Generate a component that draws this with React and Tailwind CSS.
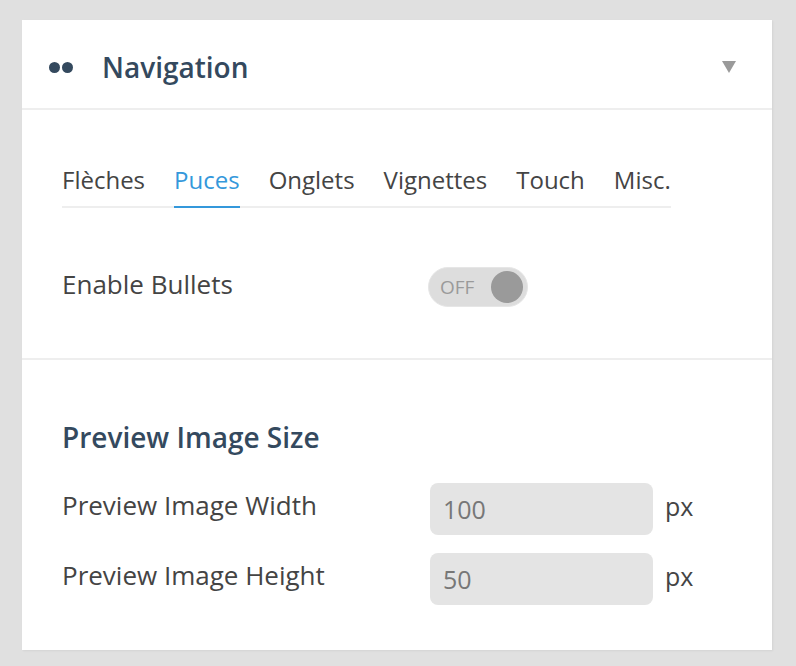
export default function App() {
  const tabs = ["Flèches", "Puces", "Onglets", "Vignettes", "Touch", "Misc."];

  return (
    <div
      className="min-h-[666px] bg-[#e0e0e0] pt-[20px] pl-[22px]"
      style={{ fontFamily: '"Open Sans", sans-serif' }}
    >
      <div className="w-[750px] h-[630px] bg-white shadow-[1px_1px_2px_rgba(0,0,0,0.06)]">
        {/* Header */}
        <div className="h-[90px] flex items-center pl-[27px] pr-[36px] pt-[6px] border-b-2 border-[#eeeeee]">
          <div className="flex gap-[2px]">
            <span className="w-[11px] h-[11px] rounded-full bg-[#34495e]" />
            <span className="w-[11px] h-[11px] rounded-full bg-[#34495e]" />
          </div>
          <h2 className="ml-[29px] text-[28px] font-semibold text-[#34495e]">Navigation</h2>
          <svg className="ml-auto" width="14" height="12" viewBox="0 0 14 12">
            <path d="M0 0H14L7 12Z" fill="#9a9a9a" />
          </svg>
        </div>

        {/* Tabs section */}
        <div className="h-[250px] px-[40px] pt-[53px] border-b-2 border-[#eeeeee]">
          <div className="inline-flex gap-[29px] border-b-2 border-[#eeeeee]">
            {tabs.map((t) => (
              <div
                key={t}
                className={
                  t === "Puces"
                    ? "text-[24px] leading-[34px] pb-[9px] -mb-[2px] border-b-2 border-[#3498db] text-[#3498db]"
                    : "text-[24px] leading-[34px] pb-[9px] -mb-[2px] border-b-2 border-transparent text-[#444444]"
                }
              >
                {t}
              </div>
            ))}
          </div>

          <div className="flex items-center mt-[57px]">
            <span className="w-[366px] text-[26px] text-[#444444] pb-[5px]">Enable Bullets</span>
            <div className="w-[100px] h-[40px] rounded-full bg-[#dddddd] border border-[#e6e6e6] flex items-center pl-[11px] pr-[4px]">
              <span className="text-[19px] text-[#9a9a9a]">OFF</span>
              <span className="ml-auto w-[32px] h-[32px] rounded-full bg-[#9a9a9a]" />
            </div>
          </div>
        </div>

        {/* Preview Image Size */}
        <div className="px-[40px] pt-[61px]">
          <h3 className="text-[28px] font-semibold text-[#34495e] leading-[32px]">Preview Image Size</h3>
          <div className="mt-[30px] flex flex-col gap-[18px]">
            {[
              ["Preview Image Width", "100"],
              ["Preview Image Height", "50"],
            ].map(([label, val]) => (
              <div key={label} className="flex items-center">
                <span className="w-[368px] text-[26px] text-[#444444] pb-[8px]">{label}</span>
                <div className="w-[223px] h-[52px] rounded-[8px] bg-[#e4e4e4] flex items-center px-[13px] pt-[2px]">
                  <span className="text-[25px] text-[#777777]">{val}</span>
                </div>
                <span className="ml-[12px] text-[25px] text-[#444444] pb-[4px]">px</span>
              </div>
            ))}
          </div>
        </div>
      </div>
    </div>
  );
}
